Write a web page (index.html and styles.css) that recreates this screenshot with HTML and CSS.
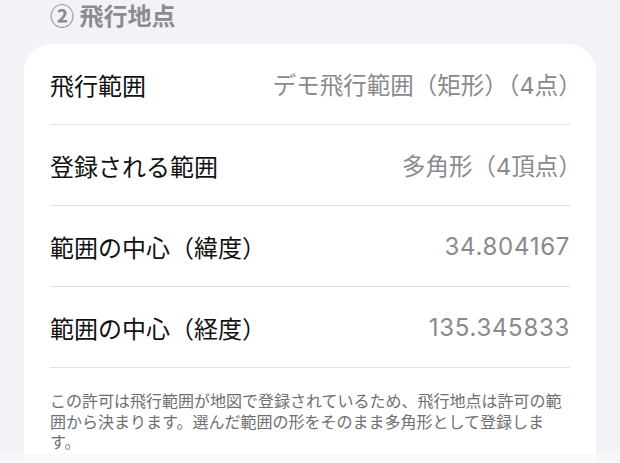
FILE: index.html
```html
<!DOCTYPE html>
<html lang="ja">
<head>
<meta charset="utf-8">
<link rel="stylesheet" href="styles.css">
</head>
<body>
<main class="screen">
  <h2 class="section-title">② 飛行地点</h2>
  <section class="card">
    <div class="row">
      <span class="label">飛行範囲</span>
      <span class="value paren-end">デモ飛行範囲（矩形）（4点）</span>
    </div>
    <div class="row">
      <span class="label">登録される範囲</span>
      <span class="value paren-end">多角形（4頂点）</span>
    </div>
    <div class="row">
      <span class="label">範囲の中心（緯度）</span>
      <span class="value num">34.804167</span>
    </div>
    <div class="row">
      <span class="label">範囲の中心（経度）</span>
      <span class="value num">135.345833</span>
    </div>
    <p class="note">この許可は飛行範囲が地図で登録されているため、飛行地点は許可の範囲から決まります。選んだ範囲の形をそのまま多角形として登録します。</p>
  </section>
</main>
<div class="bottom-bar"></div>
</body>
</html>
```

FILE: styles.css
```css
html, body {
  margin: 0;
  padding: 0;
  height: 100%;
  overflow: hidden;
  background: #f2f2f7;
}

body {
  font-family: "Noto Sans CJK JP", "Noto Sans", sans-serif;
  color: #111;
}

.screen {
  display: flex;
  flex-direction: column;
  padding: 0 24px;
}

.section-title {
  margin: 0;
  padding-left: 26px;
  height: 30px;
  line-height: 30px;
  font-size: 24px;
  font-weight: 700;
  color: #8c8c90;
}

.card {
  margin-top: 14px;
  background: #ffffff;
  border-radius: 28px;
  padding: 0 26px 40px;
  display: flex;
  flex-direction: column;
}

.row {
  height: 80px;
  border-bottom: 1px solid #e2e2e5;
  display: flex;
  align-items: center;
  justify-content: space-between;
  gap: 16px;
}

.label {
  font-size: 24px;
  color: #111111;
  white-space: nowrap;
}

.value {
  font-family: "Inter", "Noto Sans CJK JP", sans-serif;
  font-size: 23.5px;
  color: #8a8a8e;
  white-space: nowrap;
}

.value.paren-end {
  margin-right: -0.5em;
}

.value.num {
  font-size: 24px;
  letter-spacing: 0.7px;
}

.note {
  margin: 22px 0 0;
  font-size: 16px;
  line-height: 20.5px;
  color: #6e6e73;
}

.bottom-bar {
  position: fixed;
  left: 0;
  right: 0;
  bottom: 0;
  height: 9px;
  background: rgba(248, 248, 250, 0.75);
}
```
